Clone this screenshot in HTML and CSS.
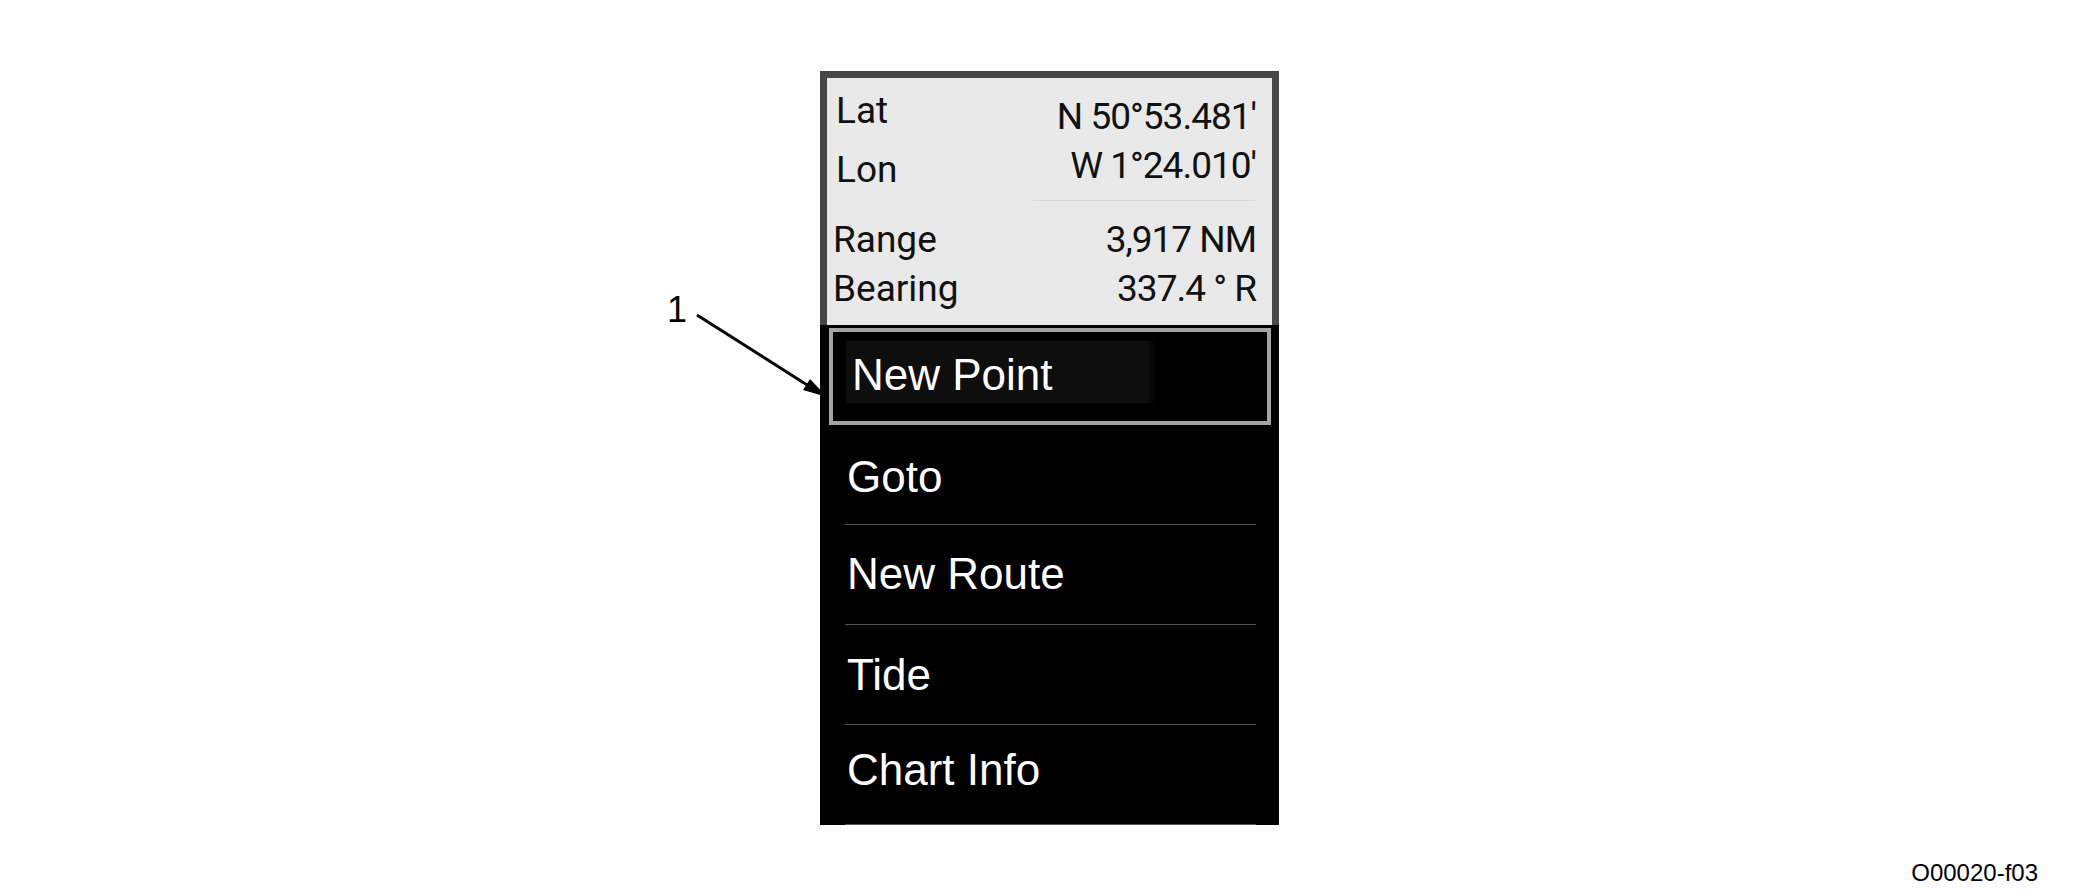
FILE: index.html
```html
<!DOCTYPE html>
<html lang="en">
<head>
<meta charset="utf-8">
<title>Context menu</title>
<link rel="stylesheet" href="styles.css">
</head>
<body>
<div class="page">
  <div class="figure">
    <div class="callout-num">1</div>
    <svg class="callout-arrow" width="150" height="100" viewBox="0 0 150 100">
      <line x1="7" y1="5" x2="125" y2="80" stroke="#000" stroke-width="3"/>
      <polygon points="137,87 113,80 120,69" fill="#000"/>
    </svg>
    <div class="device">
      <div class="info">
        <div class="row row-lat">
          <span class="label">Lat</span>
          <span class="value">N 50°53.481'</span>
        </div>
        <div class="row row-lon">
          <span class="label">Lon</span>
          <span class="value">W 1°24.010'</span>
        </div>
        <div class="info-sep"></div>
        <div class="row row-range">
          <span class="label">Range</span>
          <span class="value">3,917 NM</span>
        </div>
        <div class="row row-bearing">
          <span class="label">Bearing</span>
          <span class="value">337.4 ° R</span>
        </div>
      </div>
      <div class="menu">
        <div class="item selected"><span class="item-text">New Point</span><span class="item-shade"></span></div>
        <div class="item item-goto">Goto</div>
        <div class="item item-route">New Route</div>
        <div class="item item-tide">Tide</div>
        <div class="item item-chart">Chart Info</div>
      </div>
    </div>
  </div>
  <div class="fig-id">O00020-f03</div>
</div>
</body>
</html>
```

FILE: styles.css
```css
html, body {
  margin: 0;
  padding: 0;
  background: #fff;
}

.page {
  width: 2100px;
  height: 895px;
  display: flex;
  flex-direction: column;
  font-family: "Liberation Sans", Arial, sans-serif;
}

.figure {
  position: relative;
  margin-left: 820px;
  margin-top: 71px;
  width: 459px;
}

.callout-num {
  position: absolute;
  left: -153px;
  top: 221px;
  font-size: 36px;
  line-height: 1;
  color: #000;
}

.callout-arrow {
  position: absolute;
  left: -130px;
  top: 239px;
  z-index: 2;
}

.device {
  width: 459px;
  background: #000;
  display: flex;
  flex-direction: column;
}

.info {
  display: flex;
  flex-direction: column;
  background: #e9e9e9;
  border: 7px solid #474747;
  border-bottom: none;
  padding: 8px 17px 12px 0;
  font-family: Roboto, "Liberation Sans", sans-serif;
  font-size: 37px;
  line-height: 49px;
  color: #111;
}

.row {
  display: flex;
  justify-content: space-between;
  align-items: flex-start;
}

.value {
  letter-spacing: -1px;
  margin-right: -1px;
}

.row-lat .label { padding-left: 9px; }
.row-lat .value { margin-top: 6px; }

.row-lon .label { padding-left: 9px; margin-top: 4px; }

.row-range .label,
.row-bearing .label { padding-left: 6px; }

.info-sep {
  margin: 6px 0 14px auto;
  width: 222px;
  height: 1px;
  background: #d7d7d7;
}

.menu {
  display: flex;
  flex-direction: column;
  padding: 3px 8px 0 9px;
  color: #fff;
  font-size: 44px;
}

.item {
  height: 99px;
  line-height: 99px;
  margin: 0 15px 0 16px;
  padding-left: 2px;
  border-bottom: 1px solid #575757;
  box-sizing: border-box;
  height: 100px;
}

.item-goto { padding-top: 4px; line-height: 95px; }
.item-route { line-height: 97px; }
.item-tide { padding-top: 1px; line-height: 97px; }
.item-chart { line-height: 89px; }

.item.selected {
  display: flex;
  align-items: flex-start;
  height: 97px;
  line-height: 62px;
  margin: 0;
  padding: 9px 0 0 13px;
  border: 4px solid #a4a4a4;
  background: #000;
}

.item-text {
  display: block;
  padding: 3px 96px 0 6px;
  height: 59px;
  background: #0e0e0e;
}

.item-shade {
  display: block;
  width: 8px;
  height: 62px;
  background: linear-gradient(to right, #0a0a0a, #000);
}

.fig-id {
  align-self: flex-end;
  margin-right: 62px;
  margin-top: 35px;
  font-size: 24px;
  line-height: 26px;
  color: #000;
}
```
